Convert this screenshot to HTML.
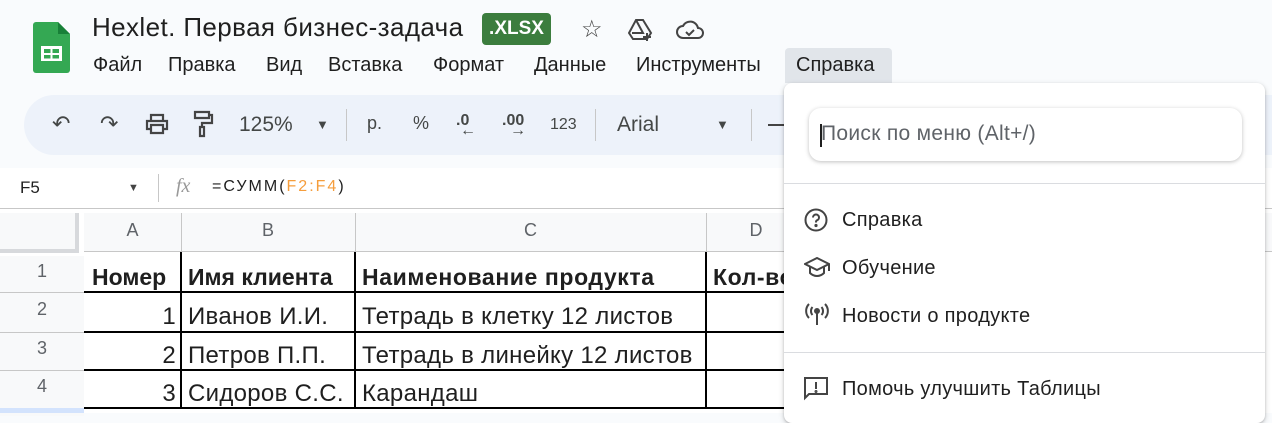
<!DOCTYPE html>
<html><head><meta charset="utf-8"><style>
*{box-sizing:border-box;margin:0;padding:0}
body{width:1272px;height:413px;overflow:hidden;background:#f9fbfd;font-family:"Liberation Sans",Arial,sans-serif;position:relative;color:#1f1f1f}
.abs{position:absolute}
.menu span{position:absolute;top:54px;font-size:20px;color:#1f1f1f}
.tb{position:absolute;left:24px;top:95px;width:1300px;height:60px;background:#edf2fa;border-radius:30px}
.tb .t{position:absolute;top:18px;font-size:20px;color:#444746}
.grid{position:absolute;left:0;top:208px;width:1272px;height:205px;background:#fff}
.cell{position:absolute;font-size:24px;letter-spacing:0.3px;white-space:nowrap;overflow:hidden}
.hdr{position:absolute;color:#5f6368;font-size:18px;text-align:center}
.panel{position:absolute;left:784px;top:83px;width:481px;height:340px;background:#fff;border-radius:8px;box-shadow:0 2px 6px rgba(0,0,0,.2),0 1px 2px rgba(0,0,0,.15)}
.item{position:absolute;left:58px;font-size:20px;letter-spacing:0.3px;color:#1f1f1f}
.ic{position:absolute;left:20px}
.b{font-weight:bold;font-size:23px;letter-spacing:0.6px}
</style></head><body>
<svg class="abs" style="left:33px;top:22px" width="37" height="51" viewBox="0 0 37 51"><path d="M3 0H25L37 12V48a3 3 0 0 1-3 3H3a3 3 0 0 1-3-3V3a3 3 0 0 1 3-3z" fill="#34a853"/><path d="M25 0L37 12H25z" fill="#188038"/><rect x="8" y="24" width="21" height="15" fill="#fff"/><rect x="11" y="27" width="6.5" height="4" fill="#34a853"/><rect x="19.5" y="27" width="6.5" height="4" fill="#34a853"/><rect x="11" y="33" width="6.5" height="3.5" fill="#34a853"/><rect x="19.5" y="33" width="6.5" height="3.5" fill="#34a853"/></svg>
<div class="abs" style="left:92px;top:12px;font-size:26px;letter-spacing:0.4px;color:#1f1f1f">Hexlet. Первая бизнес-задача</div>
<div class="abs" style="left:482px;top:13px;width:69px;height:32px;background:#3c7d3e;border-radius:4px;color:#fff;font-size:19px;font-weight:bold;text-align:center;line-height:32px">.XLSX</div>
<div class="abs" style="left:581px;top:15px;font-size:24px;color:#444">☆</div>
<svg class="abs" style="left:628px;top:18px" width="26" height="24" viewBox="0 0 26 24" fill="none" stroke="#444" stroke-width="2"><path d="M8 2h7l8 13-4 6H5L1 15z"/><path d="M8 2l7 13H4"/><path d="M19 15v8M15 19h8"/></svg>
<svg class="abs" style="left:676px;top:20px" width="28" height="20" viewBox="0 0 28 20" fill="none" stroke="#444" stroke-width="2"><path d="M7 18a6 6 0 0 1 0-12 8 8 0 0 1 15 2 5 5 0 0 1 0 10z"/><path d="M10 12l3 3 5-5"/></svg>
<div class="abs" style="left:785px;top:48px;width:107px;height:35px;background:#e1e5ea;border-radius:4px 4px 0 0"></div>
<div class="menu"><span style="left:93px">Файл</span><span style="left:168px">Правка</span><span style="left:266px">Вид</span><span style="left:328px">Вставка</span><span style="left:433px">Формат</span><span style="left:534px">Данные</span><span style="left:636px">Инструменты</span><span style="left:796px">Справка</span></div>
<div class="tb">
<span class="t" style="left:28px;font-size:22px;top:16px">↶</span><span class="t" style="left:76px;font-size:22px;top:16px">↷</span>
<svg class="abs" style="left:121px;top:18px" width="24" height="22" viewBox="0 0 24 22" fill="none" stroke="#444" stroke-width="2.2"><path d="M6 7V2h12v5M5 16H2V8h20v8h-3M6 12h12v8H6z"/></svg>
<svg class="abs" style="left:168px;top:15px" width="22" height="28" viewBox="0 0 22 28" fill="none" stroke="#444" stroke-width="2.2"><path d="M3 2h14v6H3zM17 5h3v8H10v4M8 17h4v9H8z"/></svg>
<span class="t" style="left:215px;font-size:21px">125%</span><span class="t" style="left:292px;font-size:13px;top:22px">▼</span>
<div class="abs" style="left:322px;top:14px;width:1px;height:32px;background:#c7c7c7"></div>
<span class="t" style="left:343px;font-size:18px">р.</span><span class="t" style="left:389px;font-size:18px">%</span>
<span class="t" style="left:432px;font-size:16px;font-weight:bold;top:17px">.0<br><span style="position:absolute;top:10px;left:4px">←</span></span>
<span class="t" style="left:478px;font-size:16px;font-weight:bold;top:17px">.00<br><span style="position:absolute;top:10px;left:8px">→</span></span>
<span class="t" style="left:526px;font-size:16px;top:21px">123</span>
<div class="abs" style="left:571px;top:14px;width:1px;height:32px;background:#c7c7c7"></div>
<span class="t" style="left:593px;font-size:21px">Arial</span><span class="t" style="left:692px;font-size:13px;top:22px">▼</span>
<div class="abs" style="left:727px;top:14px;width:1px;height:32px;background:#c7c7c7"></div>
<div class="abs" style="left:744px;top:29px;width:16px;height:2px;background:#444"></div>
</div>
<div class="abs" style="left:0;top:168px;width:1272px;height:40px;background:#fff"></div>
<div class="abs" style="left:20px;top:178px;font-size:17px">F5</div>
<div class="abs" style="left:128px;top:182px;font-size:11px;color:#444">▼</div>
<div class="abs" style="left:158px;top:174px;width:1px;height:28px;background:#c7c7c7"></div>
<div class="abs" style="left:176px;top:175px;font-size:20px;font-style:italic;font-family:'Liberation Serif',serif;color:#999">fx</div>
<div class="abs" style="left:212px;top:178px;font-size:16px;letter-spacing:2px">=СУММ(<span style="color:#f59d3c">F2:F4</span>)</div>
<div class="grid">
<div class="abs" style="left:0;top:0;width:1272px;height:1px;background:#c7c7c7"></div>
<div class="abs" style="left:0;top:5px;width:79px;height:40px;background:#f8f9fa;border-right:4px solid #d7d9dc;border-bottom:4px solid #d7d9dc"></div>
<div class="abs" style="left:84px;top:5px;width:1200px;height:39px;background:#f8f9fa;border-bottom:1px solid #c7c7c7"></div>
<div class="abs" style="left:0;top:48px;width:84px;height:160px;background:#f8f9fa"></div>
<div class="hdr" style="left:84px;top:12px;width:97px">A</div>
<div class="hdr" style="left:181px;top:12px;width:174px">B</div>
<div class="hdr" style="left:355px;top:12px;width:351px">C</div>
<div class="hdr" style="left:706px;top:12px;width:100px">D</div>
<div class="abs" style="left:181px;top:5px;width:1px;height:39px;background:#c7c7c7"></div>
<div class="abs" style="left:355px;top:5px;width:1px;height:39px;background:#c7c7c7"></div>
<div class="abs" style="left:706px;top:5px;width:1px;height:39px;background:#c7c7c7"></div>
<div class="hdr" style="left:0;top:53px;width:84px">1</div>
<div class="hdr" style="left:0;top:91px;width:84px">2</div>
<div class="hdr" style="left:0;top:130px;width:84px">3</div>
<div class="hdr" style="left:0;top:168px;width:84px">4</div>
<div class="abs" style="left:0;top:84px;width:84px;height:1px;background:#c7c7c7"></div>
<div class="abs" style="left:0;top:124px;width:84px;height:1px;background:#c7c7c7"></div>
<div class="abs" style="left:0;top:162px;width:84px;height:1px;background:#c7c7c7"></div>
<div class="abs" style="left:0;top:200px;width:84px;height:5px;background:#d3e3fd"></div>
<div class="abs" style="left:84px;top:83px;width:700px;height:2px;background:#000"></div>
<div class="abs" style="left:84px;top:123px;width:700px;height:2px;background:#000"></div>
<div class="abs" style="left:84px;top:161px;width:700px;height:2px;background:#000"></div>
<div class="abs" style="left:84px;top:199px;width:700px;height:2px;background:#000"></div>
<div class="abs" style="left:180px;top:44px;width:2px;height:157px;background:#000"></div>
<div class="abs" style="left:354px;top:44px;width:2px;height:157px;background:#000"></div>
<div class="abs" style="left:705px;top:44px;width:2px;height:157px;background:#000"></div>
<div class="cell b" style="left:92px;top:56px;letter-spacing:0">Номер</div>
<div class="cell b" style="left:188px;top:56px;letter-spacing:0">Имя клиента</div>
<div class="cell b" style="left:362px;top:56px">Наименование продукта</div>
<div class="cell b" style="left:713px;top:56px;width:71px">Кол-во</div>
<div class="cell" style="left:84px;top:95px;width:92px;text-align:right">1</div>
<div class="cell" style="left:84px;top:134px;width:92px;text-align:right">2</div>
<div class="cell" style="left:84px;top:172px;width:92px;text-align:right">3</div>
<div class="cell" style="left:188px;top:95px">Иванов И.И.</div>
<div class="cell" style="left:188px;top:134px">Петров П.П.</div>
<div class="cell" style="left:188px;top:172px">Сидоров С.С.</div>
<div class="cell" style="left:362px;top:95px">Тетрадь в клетку 12 листов</div>
<div class="cell" style="left:362px;top:134px">Тетрадь в линейку 12 листов</div>
<div class="cell" style="left:362px;top:172px">Карандаш</div>
</div>
<div class="panel">
<div class="abs" style="left:25px;top:25px;width:433px;height:53px;border-radius:12px;box-shadow:0 1px 4px rgba(0,0,0,.25);background:#fff"></div>
<div class="abs" style="left:36px;top:41px;width:2px;height:23px;background:#1f1f1f"></div>
<div class="abs" style="left:37px;top:39px;font-size:21px;letter-spacing:0.3px;color:#5f6368">Поиск по меню (Alt+/)</div>
<div class="abs" style="left:0;top:100px;width:481px;height:1px;background:#dadce0"></div>
<svg class="ic" style="top:125px" width="24" height="24" viewBox="0 0 24 24" fill="none" stroke="#444" stroke-width="2"><circle cx="12" cy="12" r="10.5"/><path d="M9 9.5a3 3 0 1 1 4 2.8c-.7.4-1 1-1 1.7v.5"/><circle cx="12" cy="17.5" r=".6" fill="#444"/></svg>
<div class="item" style="top:126px">Справка</div>
<svg class="ic" style="top:174px" width="26" height="22" viewBox="0 0 26 22" fill="none" stroke="#444" stroke-width="2"><path d="M1 7l12-6 12 6-12 6z"/><path d="M6 10v6c4 4 10 4 14 0v-6M25 7v7"/></svg>
<div class="item" style="top:174px">Обучение</div>
<svg class="ic" style="top:220px" width="26" height="24" viewBox="0 0 26 24" fill="none" stroke="#444" stroke-width="2"><circle cx="13" cy="8" r="2" fill="#444"/><path d="M13 10v12M8.5 4a6 6 0 0 0 0 8M17.5 4a6 6 0 0 1 0 8M5 1a10 10 0 0 0 0 14M21 1a10 10 0 0 1 0 14"/></svg>
<div class="item" style="top:222px">Новости о продукте</div>
<div class="abs" style="left:0;top:269px;width:481px;height:1px;background:#dadce0"></div>
<svg class="ic" style="top:294px" width="24" height="24" viewBox="0 0 24 24" fill="none" stroke="#444" stroke-width="2"><path d="M1 1h22v16H5l-4 4z"/><path d="M12 5v7"/><circle cx="12" cy="14.5" r=".5" fill="#444"/></svg>
<div class="item" style="top:295px">Помочь улучшить Таблицы</div>
</div>
</body></html>
